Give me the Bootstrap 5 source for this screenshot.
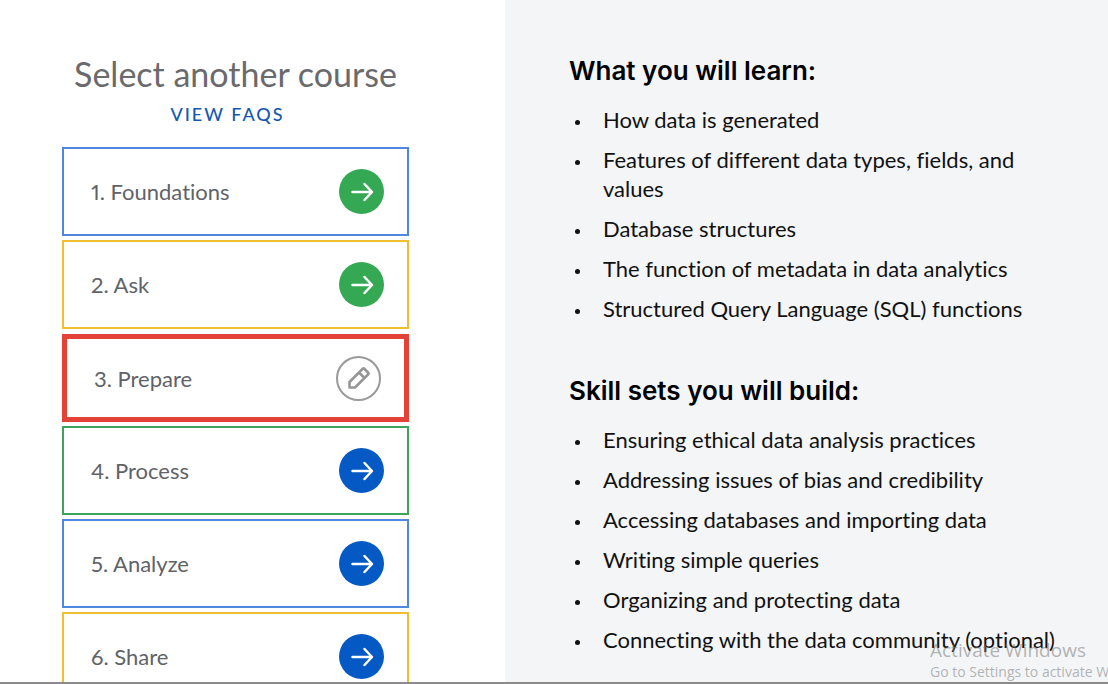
<!DOCTYPE html>
<html lang="en">
<head>
<meta charset="utf-8">
<meta name="viewport" content="width=device-width, initial-scale=1">
<title>Select another course</title>
<link href="https://cdn.jsdelivr.net/npm/bootstrap@5.3.0/dist/css/bootstrap.min.css" rel="stylesheet">
<style>
  body { font-family: Lato, "Open Sans", sans-serif; font-variant-ligatures: none; font-variant-numeric: proportional-nums; color: #111; background: #fff; }
  .screen { border-bottom: 2px solid #8b8b8b; }
  .courses { flex: 0 0 505px; width: 505px; padding: 54px 96px 0 62px; }
  .courses h1 { font-size: 34px; line-height: 40px; color: #6a6a6d; font-weight: 400; }
  .faqs { font-size: 18px; line-height: 24px; letter-spacing: 2px; color: #1558b0; font-weight: 500; }
  .faq-row { line-height: 24px; margin-top: 8px; }
  .course-list { gap: 4px; margin-top: 20px; }
  .course { height: 89px; border: 2px solid; padding: 0 23px 0 27px; font-size: 22px; color: #5f6368; text-decoration: none; }
  .edge-blue { border-color: #4f86e0; }
  .edge-yellow { border-color: #f0bf30; }
  .edge-green { border-color: #3fa45b; }
  .edge-red { border: 5px solid #e34337; height: 88px; margin-top: 1px; }
  .go { width: 45px; height: 45px; }
  .details { background: #f3f5f7; padding: 55px 40px 0 64px; }
  .details h2 { font-family: Inter, sans-serif; font-size: 26px; line-height: 32px; font-weight: 600; color: #000; margin: 0 0 18px; }
  .details ul { margin: 0 0 52px; }
  .details li { font-size: 22px; line-height: 29px; margin-bottom: 11px; }
  .details li::before { content: ""; flex: none; width: 5px; height: 5px; border-radius: 50%; background: #111; margin: 15px 23px 0 6px; }
  .watermark { right: 0; bottom: 0; width: 178px; font-family: "Open Sans", sans-serif; color: rgba(120,120,120,.55); pointer-events: none; }
  .watermark-title { font-size: 19px; line-height: 24px; }
  .watermark-text { font-size: 14px; line-height: 20px; }
</style>
</head>
<body>
<svg class="d-none">
  <symbol id="arrow" viewBox="0 0 45 45"><circle cx="22.500" cy="22.500" r="22.500" fill="currentColor"/><path d="M13.500 23H32.500M25.500 15L33 23L25.500 31" fill="none" stroke="#fff" stroke-width="2.500" stroke-linecap="round" stroke-linejoin="round"/></symbol>
  <symbol id="pencil" viewBox="0 0 45 45"><circle cx="22.500" cy="22.500" r="21.500" fill="none" stroke="#999" stroke-width="2"/><path d="M13.500 31.500V26L26.500 13Q27.500 12 28.500 13L32 16.500Q33 17.500 32 18.500L19 31.500ZM23 16.500L28.500 22" fill="none" stroke="#969696" stroke-width="2.600" stroke-linejoin="round"/></symbol>
</svg>
<div class="screen position-relative d-flex vh-100 overflow-hidden">
  <nav class="courses" aria-label="Courses">
    <h1 class="text-center text-nowrap m-0">Select another course</h1>
    <div class="faq-row text-center pe-3"><a href="#" class="faqs text-decoration-none">VIEW FAQS</a></div>
    <div class="course-list d-flex flex-column">
      <a href="#" class="course edge-blue d-flex align-items-center justify-content-between">1. Foundations<svg class="go" color="#34a853"><use href="#arrow"/></svg></a>
      <a href="#" class="course edge-yellow d-flex align-items-center justify-content-between">2. Ask<svg class="go" color="#34a853"><use href="#arrow"/></svg></a>
      <a href="#" class="course edge-red d-flex align-items-center justify-content-between">3. Prepare<svg class="go"><use href="#pencil"/></svg></a>
      <a href="#" class="course edge-green d-flex align-items-center justify-content-between">4. Process<svg class="go" color="#0459c4"><use href="#arrow"/></svg></a>
      <a href="#" class="course edge-blue d-flex align-items-center justify-content-between">5. Analyze<svg class="go" color="#0459c4"><use href="#arrow"/></svg></a>
      <a href="#" class="course edge-yellow d-flex align-items-center justify-content-between">6. Share<svg class="go" color="#0459c4"><use href="#arrow"/></svg></a>
    </div>
  </nav>
  <main class="details flex-grow-1">
    <h2>What you will learn:</h2>
    <ul class="list-unstyled">
      <li class="d-flex">How data is generated</li>
      <li class="d-flex">Features of different data types, fields, and values</li>
      <li class="d-flex">Database structures</li>
      <li class="d-flex">The function of metadata in data analytics</li>
      <li class="d-flex">Structured Query Language (SQL) functions</li>
    </ul>
    <h2>Skill sets you will build:</h2>
    <ul class="list-unstyled">
      <li class="d-flex">Ensuring ethical data analysis practices</li>
      <li class="d-flex">Addressing issues of bias and credibility</li>
      <li class="d-flex">Accessing databases and importing data</li>
      <li class="d-flex">Writing simple queries</li>
      <li class="d-flex">Organizing and protecting data</li>
      <li class="d-flex">Connecting with the data community (optional)</li>
    </ul>
  </main>
  <div class="watermark position-absolute text-nowrap overflow-hidden">
    <div class="watermark-title">Activate Windows</div>
    <div class="watermark-text">Go to Settings to activate Windows.</div>
  </div>
</div>
<script src="https://cdn.jsdelivr.net/npm/bootstrap@5.3.0/dist/js/bootstrap.bundle.min.js"></script>
</body>
</html>
